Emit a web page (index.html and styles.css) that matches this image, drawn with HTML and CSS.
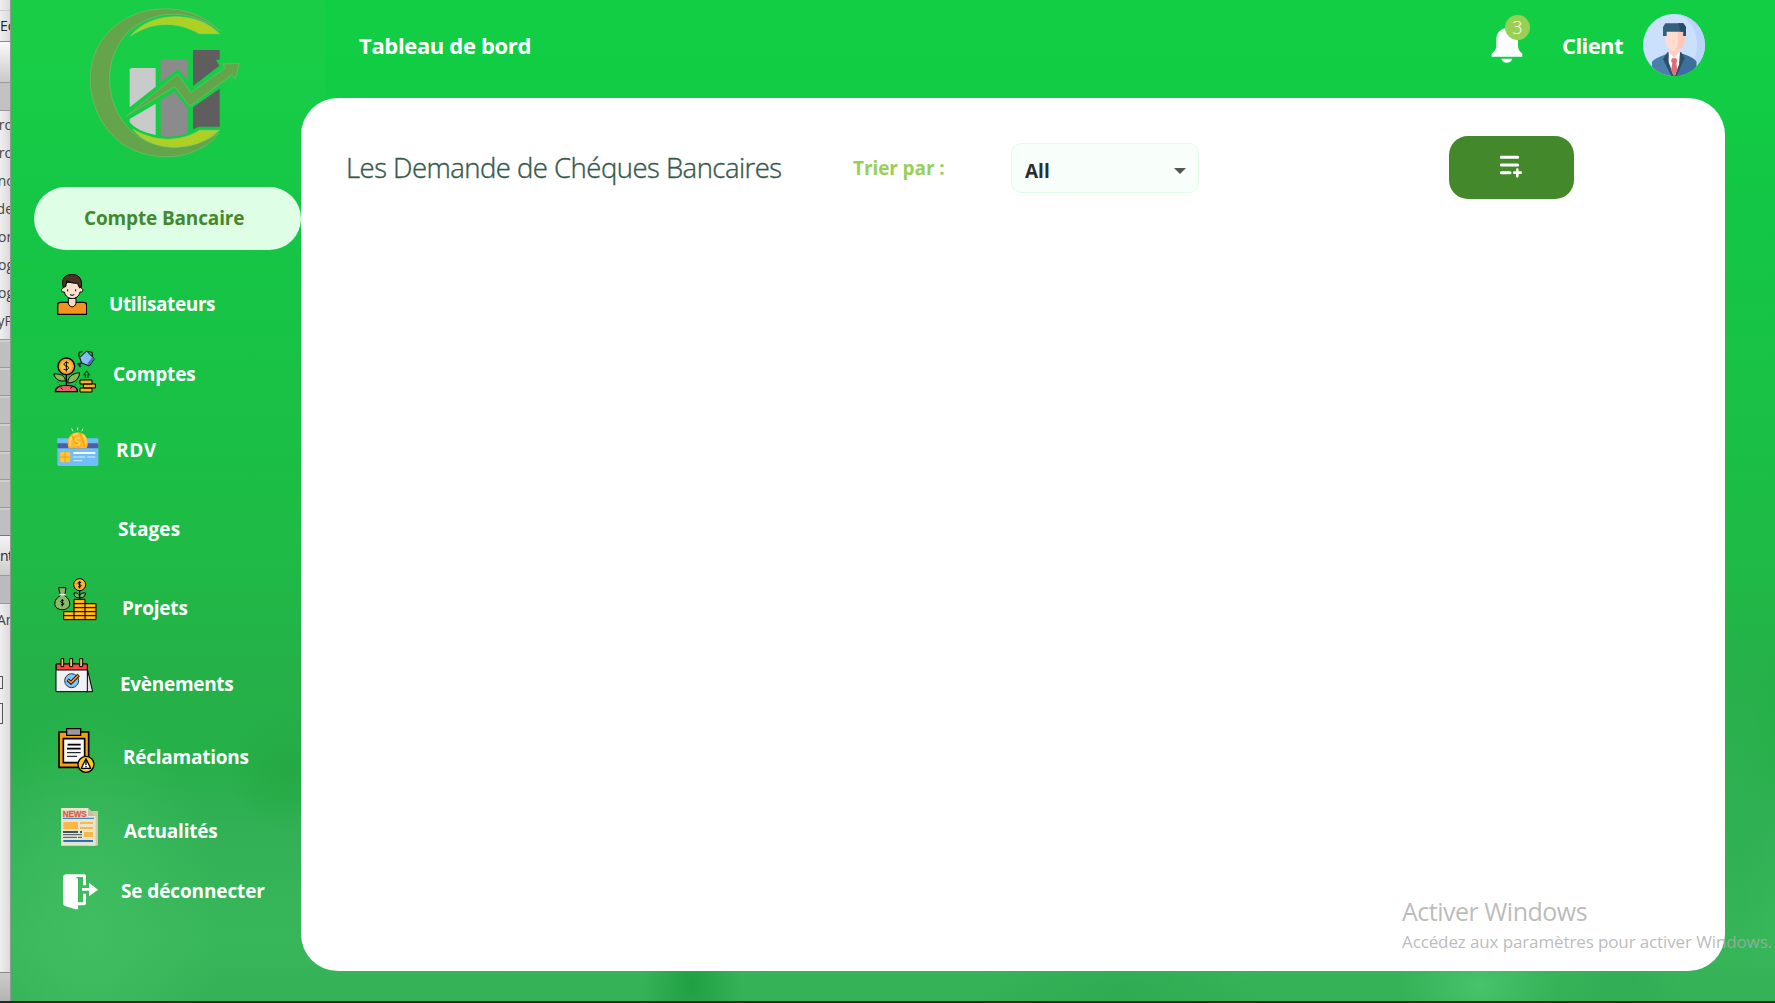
FILE: index.html
```html
<!DOCTYPE html>
<html lang="fr">
<head>
<meta charset="utf-8">
<title>Tableau de bord</title>
<link rel="stylesheet" href="styles.css">
</head>
<body>
<div class="screen">
  <aside class="behind">
    <div class="b-line b-top"></div>
    <div class="b-line b-edit">Ec</div>
    <div class="b-bar b-tools"></div>
    <div class="b-bar b-tab"></div>
    <div class="b-list"><span class="end">pro</span><span class="end">pro</span><span class="end">nc</span><span class="end">de</span><span>or</span><span>og</span><span>og</span><span class="end">yP</span></div>
    <div class="b-stack"></div>
    <div class="b-bar b-cont">nt</div>
    <div class="b-bar b-head"></div>
    <div class="b-an">An</div>
    <div class="b-box"></div>
    <div class="b-box b-box-tall"></div>
    <div class="b-foot"></div>
  </aside>

  <nav class="sidebar">
    <svg class="logo" viewBox="255 0 480 480">
      <path d="M658 92C570-2 385 2 303 124c-62 98-30 232 56 302 90 66 230 60 299-28-88 58-204 62-274-16-74-82-72-208-4-282 70-70 186-80 278-8z" fill="#64a44a" stroke="#7cbd6e" stroke-width="2"/>
      <path d="M392 108C450 34 590 30 658 101h-60c-66-38-142-38-206 7z" fill="#aed022" stroke="#8fd06a" stroke-width="2"/>
      <path d="M398 387c58 36 138 44 200 4h60c-74 70-206 66-260-4z" fill="#aed022" stroke="#8fd06a" stroke-width="2"/>
      <path d="M389 207l6-3h72v56l-78 62zM389 357l78-46v94q-58-12-78-38z" fill="#c9cbca"/>
      <path d="M482 178h81v63l-30-34-51 40zM482 300l42-25 39 49v76q-38 14-81 9z" fill="#8b8b8b"/>
      <path d="M579 150h80v29h-11l10 18-79 61zM579 322l80-56v114h-62l-18 8z" fill="#5f5d5e"/>
      <path d="M380 348l153-126 40 56 104-75-9-11 50-2-12 46-11-11-126 94-45-59z" fill="#64a44a" stroke="#7cbd6e" stroke-width="2"/>
    </svg>
    <a class="account">Compte Bancaire</a>
    <ul class="menu">
      <li class="utilisateurs">
        <svg width="30" height="41" viewBox="171 72 90 123">
          <path d="M173 193v-28q0-8 9-8h69q9 0 9 8v28z" fill="#f6921e" stroke="#000" stroke-width="4"/>
          <path d="M205 145v17q11 18 23 0v-17z" fill="#f8dcc8" stroke="#000" stroke-width="3"/>
          <path d="M189 115c-6 0-6 11 0 11h4c6 26 42 26 47 0h4c6 0 6-11 0-11l-5-18h-44z" fill="#fbe2cf" stroke="#000" stroke-width="3"/>
          <path d="M190 112c-8-25 5-37 20-38 23-4 38 10 34 36l-5 4-7-14c-14 0-22-2-31-8l-4 18z" fill="#493323" stroke="#000" stroke-width="3"/>
          <path d="M203 118v6M227 118v6M210 134q6 4 13 0" fill="none" stroke="#000" stroke-width="3"/>
        </svg>
        <span>Utilisateurs</span>
      </li>
      <li class="comptes">
        <svg width="43" height="43" viewBox="160 299 129 129">
          <path d="M200 372v38" stroke="#000" stroke-width="4"/>
          <path d="M162 371c20-2 33 5 36 20-18 4-30-3-36-20zM240 367c-22 2-35 12-36 31 20 0 34-10 36-31z" fill="#88b858" stroke="#000" stroke-width="3"/>
          <circle cx="200" cy="348" r="25" fill="#faa21b" stroke="#000" stroke-width="4"/><circle cx="200" cy="348" r="17" fill="#ffc34d"/>
          <path d="M207 338c-16-6-18 8-7 9s8 16-8 10M200 332v32" fill="none" stroke="#000" stroke-width="3"/>
          <path d="M167 424c0-14 14-19 33-19s34 5 33 19z" fill="#ef6065" stroke="#000" stroke-width="4"/>
          <path d="M184 412l4 5M212 414l6-4" stroke="#000" stroke-width="3"/>
          <path d="M241 389h36v12h-36zM251 401h36v12h-36zM241 413h36v12h-36z" fill="#ffb022" stroke="#000" stroke-width="3"/>
          <path d="M238 320v-14l10-2M264 303l14 3v12" fill="none" stroke="#000" stroke-width="3"/>
          <path d="M240 322l21-20 23 24-15 21-23-9z" fill="#86bdf5" stroke="#000" stroke-width="3"/><path d="M284 326l-16 20-6-5 16-20z" fill="#4670b0"/>
          <path d="M248 336l-12 8M234 338l9 12" stroke="#182c48" stroke-width="6"/>
          <path d="M257 383v-10h-4l8-11 8 11h-4v10" fill="none" stroke="#093" stroke-width="5"/><path d="M257 383v-10h-4l8-11 8 11h-4v10M175 394v3M179 405v-3M231 394v3M226 405v-3" fill="none" stroke="#06280d" stroke-width="2"/>
        </svg>
        <span>Comptes</span>
      </li>
      <li class="rdv">
        <svg width="42" height="40" viewBox="170 533 126 120">
          <path d="M171 567h123v78q0 5-5 5H176q-5 0-5-5z" fill="#6fbefa"/><path d="M171 582h123v15H171z" fill="#505ea0"/>
          <path d="M205 597c-8-20 0-48 27-48s36 28 27 48z" fill="#ffb52e"/><path d="M210 590c-4-18 5-36 22-36M247 556c10 10 12 26 6 38" fill="none" stroke="#ffd968" stroke-width="5"/><path d="M213 557l23 40M240 552l14 42" stroke="#ff9d0b" stroke-width="4"/>
          <path d="M240 567c-18-6-20 10-8 10s8 14-8 10" fill="none" stroke="#ffd65c" stroke-width="4"/>
          <path d="M214 538l4 8M232 534v9M248 538l-4 8" stroke="#dff3de" stroke-width="3"/>
          <rect x="179" y="608" width="31" height="31" rx="6" fill="#ffc735"/><path d="M179 623h31M194 608v31" stroke="#f59b16" stroke-width="3"/>
          <path d="M219 611h66" stroke="#f5fbff" stroke-width="6"/><path d="M219 623h36M261 623h24M219 634h27" stroke="#d9efff" stroke-width="3"/>
        </svg>
        <span>RDV</span>
      </li>
      <li class="stages"><span>Stages</span></li>
      <li class="projets">
        <svg width="43" height="43" viewBox="161 263 129 129">
          <path d="M238 300v27" stroke="#000" stroke-width="4"/><circle cx="238" cy="283" r="18" fill="#ffb12b" stroke="#000" stroke-width="3"/><path d="M242 277c-10-5-12 5-4 6s4 10-5 6M238 272v22" fill="none" stroke="#000" stroke-width="3"/>
          <path d="M221 308c10-2 17 4 17 14-11 2-17-4-17-14zM255 308c-10-2-17 4-17 14 11 2 17-4 17-14z" fill="#7bb767" stroke="#000" stroke-width="3"/>
          <path d="M175 292h22l-4 24c21 13 21 42-7 42s-30-29-6-42z" fill="#8aba69" stroke="#000" stroke-width="3"/><path d="M177 313h19" stroke="#e8f2e4" stroke-width="5"/><path d="M190 331c-10-3-11 6-4 6s6 9-4 6M186 326v22" fill="none" stroke="#000" stroke-width="3"/>
          <path d="M190 388v-24h31v-37h33v13h33v48z" fill="#ffad13" stroke="#000" stroke-width="3"/>
          <path d="M221 340h33M221 352h66M221 364h66M190 376h97M221 364v24M254 340v48" stroke="#000" stroke-width="3"/>
          <path d="M196 370h18M226 334h22M226 346h18M226 358h18M260 346h20M260 358h20M226 370h18M260 370h20M196 382h18M226 382h18M260 382h20" stroke="#ffd064" stroke-width="3"/>
        </svg>
        <span>Projets</span>
      </li>
      <li class="evenements">
        <svg width="39" height="35" viewBox="164 503 117 105">
          <path d="M262 540l15 64h-20z" fill="#e2e2e2" stroke="#000" stroke-width="3"/>
          <path d="M167 521h94v83h-94z" fill="#f2f2f4" stroke="#000" stroke-width="3"/><path d="M168 521h93v18h-93z" fill="#ff4747" stroke="#000" stroke-width="3"/>
          <path d="M182 505h8v24h-8zM208 505h9v24h-9zM238 505h9v24h-9z" fill="#f6bd5d" stroke="#000" stroke-width="3"/>
          <circle cx="214" cy="571" r="21" fill="#82c3f6" stroke="#233a52" stroke-width="3"/><path d="M202 568l10 9 23-23" fill="none" stroke="#000" stroke-width="10"/><path d="M203 569l9 8 22-22" fill="none" stroke="#ff9c1c" stroke-width="5"/>
        </svg>
        <span>Evènements</span>
      </li>
      <li class="reclamations">
        <svg width="37" height="45" viewBox="174 24 111 135">
          <path d="M177 36h89v106h-89z" fill="#fb9f0f" stroke="#000" stroke-width="5"/><path d="M190 56h64v72h-64z" fill="#f8f8fa" stroke="#000" stroke-width="5"/>
          <path d="M200 26h42v20h-42z" fill="#999" stroke="#000" stroke-width="4"/><path d="M203 74h39M201 86h41" stroke="#000" stroke-width="5"/><path d="M201 98h41M201 109h30" stroke="#000" stroke-width="3"/>
          <circle cx="258" cy="133" r="24" fill="#ffc81c" stroke="#000" stroke-width="4"/><path d="M258 116l14 29h-28z" fill="#fff" stroke="#000" stroke-width="4" stroke-linejoin="round"/><path d="M258 123v12M258 138v4" stroke="#000" stroke-width="4"/>
        </svg>
        <span>Réclamations</span>
      </li>
      <li class="actualites">
        <svg width="37" height="38" viewBox="183 264 111 114">
          <path d="M265 273h29v104h-29z" fill="#cfc8aa"/><path d="M183 264h81l23 24v89H183z" fill="#e9e4cd"/><path d="M264 264v24h23z" fill="#c5c0a2"/>
          <text class="news" x="188" y="291" textLength="72" lengthAdjust="spacingAndGlyphs">NEWS</text>
          <path d="M189 295h93" stroke="#1d73bd" stroke-width="3"/><path d="M190 363h89" stroke="#1d73bd" stroke-width="6"/>
          <path d="M190 306h44v21h-44zM252 336h27v15h-27zM240 306h39v6h-39zM240 321h39v6h-39z" fill="#fdb746"/>
          <path d="M189 336h45M240 336h6" stroke="#45515c" stroke-width="6"/><path d="M189 344h57M189 352h42M234 352h12" stroke="#45515c" stroke-width="3"/>
        </svg>
        <span>Actualités</span>
      </li>
      <li class="deconnecter">
        <svg width="35" height="36" viewBox="189 461 105 108">
          <path d="M197 462h55q6 0 6 6v27h-9v-25h-22l7 5v71h15v-26h9v29q0 6-6 6h-18v12h-8l-31-10q-6-2-6-8v-78q0-7 8-9z" fill="#fff"/>
          <path d="M246 503h21v-16l27 21-27 20v-17h-21z" fill="#fff"/>
        </svg>
        <span>Se déconnecter</span>
      </li>
    </ul>
  </nav>

  <main class="main">
    <header class="topbar">
      <h1>Tableau de bord</h1>
      <div class="bell">
        <svg width="32" height="36" viewBox="332 82 96 108">
          <path d="M380 84c-22 4-32 16-32 36v18c0 11-6 17-14 24v9h92v-9c-8-7-13-13-13-24v-18c0-20-11-32-33-36zM363 177h33c-4 16-29 16-33 0z" fill="#fff"/>
        </svg>
        <span class="badge">3</span>
      </div>
      <span class="client">Client</span>
      <svg class="avatar" width="62" height="62" viewBox="789 41 186 186">
        <defs><clipPath id="face"><circle cx="882" cy="134" r="93"/></clipPath></defs>
        <g clip-path="url(#face)">
          <path d="M789 41h186v186H789z" fill="#cbe0fd"/><path d="M895 41c38 18 56 50 56 92 0 22-4 40-12 54h36V41z" fill="#b9d5f9"/>
          <path d="M816 227v-43q8-10 50-25h33q42 13 50 27v41z" fill="#4a80ab"/><path d="M908 160q36 12 41 24v43h-60z" fill="#3c6f9b"/>
          <path d="M862 156h42l10 18-24 53h-16l-25-50z" fill="#2d4f69"/>
          <path d="M866 155h34l-3 38-12 32h-5l-14-40z" fill="#fff"/>
          <path d="M868 140h29v16l-15 16-14-16z" fill="#ffcdbf"/>
          <path d="M857 92h53v24c0 16-8 34-27 36-19-2-28-19-28-36z" fill="#ffdcd0"/><path d="M893 92h22v25c0 18-10 32-30 33 12-12 9-34 8-58z" fill="#ffc8bb"/>
          <path d="M849 107V80l7-11h54l8 11v27h-8V94h-50v13z" fill="#365f7e"/><path d="M894 69h16l8 11v27h-8V94h-8z" fill="#294d68"/>
          <path d="M876 174h13l3 8-3 6 3 22-10 17-9-17 4-22-4-6z" fill="#e36d75"/>
        </g>
      </svg>
    </header>

    <section class="panel">
      <div class="toolbar">
        <h2>Les Demande de Chéques Bancaires</h2>
        <label>Trier par :</label>
        <div class="select"><span>All</span><i></i></div>
        <button class="add" aria-label="Ajouter">
          <svg width="22" height="23" viewBox="360 467 66 69"><path d="M364 474h49M364 497h49M364 520h26" stroke="#fff" stroke-width="9" stroke-linecap="round"/><path d="M412 511v20M403 520h19" stroke="#fff" stroke-width="8" stroke-linecap="round"/></svg>
        </button>
      </div>
    </section>
  </main>

  <div class="watermark"><p class="wm-title">Activer Windows</p><p class="wm-text">Accédez aux paramètres pour activer Windows.</p></div>
</div>
</body>
</html>
```
FILE: styles.css
```css
* { box-sizing: border-box; margin: 0; padding: 0; }
body { width: 1775px; height: 1003px; overflow: hidden; font-family: "Open Sans", "Noto Sans", sans-serif; }
svg { display: block; flex: none; }

.screen {
  position: relative;
  display: flex;
  width: 1775px;
  height: 1003px;
  border-bottom: 2px solid #1f2b24;
  background:
    linear-gradient(rgba(34, 203, 74, .5), rgba(34, 203, 74, 0)) 0 0 / 325px 320px no-repeat,
    radial-gradient(ellipse 50px 90px at 692px 985px, #21a043, transparent),
    radial-gradient(ellipse 80px 60px at 1480px 985px, #46c36b, transparent),
    radial-gradient(ellipse 60px 70px at 1625px 985px, #31ad55, transparent),
    radial-gradient(ellipse 140px 60px at 1120px 995px, #2eac53, transparent),
    radial-gradient(ellipse 50px 180px at 1735px 800px, #2fb052, transparent),
    radial-gradient(ellipse 60px 60px at 285px 770px, #24a944, transparent),
    radial-gradient(ellipse 130px 220px at 90px 930px, #3fbd60, transparent),
    linear-gradient(#11cf45 0, #11cd44 80px, #13c644 200px, #19c145 400px, #1fba46 560px, #25b048 680px, #27b04a 760px, #32b056 830px, #38b75a 940px, #34b057 1001px);
}

/* Strip of the window that lies behind */
.behind { width: 11px; overflow: hidden; background: linear-gradient(90deg, #efefef, #dadada); border-right: 1px solid #8f9a91; font: 14px/28px "Open Sans", sans-serif; color: #444; white-space: nowrap; }
.b-line { border-bottom: 1px solid #ccc; }
.b-top { height: 11px; }
.b-edit { height: 31px; line-height: 29px; border-color: #888; color: #222; }
.b-bar { border-bottom: 1px solid #999; }
.b-tools { height: 41px; background: linear-gradient(#fafafa, #c9c9c9); }
.b-tab { height: 28px; background: #c2c2c2; }
.b-list { display: flex; flex-direction: column; height: 228px; margin-right: -3px; line-height: 28px; }
.b-list span { height: 28px; margin-left: -2px; }
.b-list .end { align-self: flex-end; }
.b-stack { height: 196px; background: repeating-linear-gradient(#999 0 1px, #cecece 1px 3px, #bfbfbf 3px 28px); }
.b-cont { height: 41px; line-height: 40px; color: #223; background: linear-gradient(#f4f4f4, #ccc); border-top: 1px solid #777; letter-spacing: -.5px; }
.b-head { height: 28px; background: #bbb; }
.b-an { height: 72px; line-height: 31px; margin-left: -3px; }
.b-box { width: 3px; height: 13px; margin-bottom: 14px; border: 1px solid #555; border-left: 0; }
.b-box-tall { height: 21px; margin-bottom: 248px; }
.b-foot { height: 40px; background: linear-gradient(#ccc, #aaa); border-top: 1px solid #888; }

.sidebar { width: 290px; height: 1001px; }
.logo { width: 160px; height: 160px; margin-left: 74px; }
.account {
  display: block;
  width: 267px;
  height: 63px;
  margin: 27px 0 0 23px;
  padding-left: 50px;
  border-radius: 32px;
  background: #dffee6;
  color: #43882b;
  font-size: 19px;
  font-weight: 700;
  letter-spacing: -.15px;
  line-height: 62px;
}
.menu {
  display: grid;
  grid-template-rows: 70px 76px 79px 79px 76px 73px 74px 60px 60px;
  margin-top: 20px;
  list-style: none;
  color: #fff;
  font-size: 19px;
  font-weight: 700;
  letter-spacing: -.12px;
  line-height: 30px;
  white-space: nowrap;
}
.news { fill: #da5b48; stroke: #da5b48; font: 700 28px "Liberation Sans", sans-serif; letter-spacing: 0; }
.menu li { display: flex; align-items: flex-start; }
.menu span { margin-top: 19px; }
.utilisateurs { gap: 22px; padding: 4px 0 0 46px; letter-spacing: -.4px; }
.comptes { gap: 17px; padding: 10px 0 0 42px; }
.rdv { gap: 17px; padding: 11px 0 0 46px; letter-spacing: .6px; }
.stages { padding-left: 107px; letter-spacing: .1px; }
.projets { gap: 25px; padding: 4px 0 0 43px; letter-spacing: -.2px; }
.evenements { gap: 26px; padding: 8px 0 0 44px; letter-spacing: -.3px; }
.reclamations { gap: 28px; padding: 5px 0 0 47px; letter-spacing: -.25px; }
.actualites { gap: 26px; padding: 11px 0 0 50px; letter-spacing: -.2px; }
.deconnecter { gap: 23px; padding: 17px 0 0 52px; }
.menu .utilisateurs span, .menu .projets span { margin-top: 15px; }
.menu .comptes span { margin-top: 9px; }
.menu .rdv span, .menu .actualites span { margin-top: 8px; }
.menu .evenements span { margin-top: 11px; }
.menu .reclamations span { margin-top: 14px; }
.menu .deconnecter span { margin-top: 2px; }

.main { width: 1424px; }
.topbar { display: flex; align-items: flex-start; height: 98px; padding-left: 58px; color: #fff; }
.topbar h1, .client { margin-top: 29px; font-size: 22px; font-weight: 700; line-height: 32px; white-space: nowrap; }
.topbar h1 { width: 1131px; letter-spacing: -.35px; }
.bell { position: relative; width: 72px; padding: 27px 0 0 1px; }
.badge { position: absolute; left: 15px; top: 15px; width: 25px; height: 25px; border-radius: 50%; background: #98d056; font-size: 18px; font-weight: 300; line-height: 25px; text-align: center; }
.client { width: 81px; letter-spacing: -.6px; }
.avatar { margin-top: 14px; }

.panel { height: 873px; margin-top: .4px; border-radius: 37px; background: #fff; }
.toolbar { display: flex; align-items: flex-start; padding: 37.6px 0 0 45px; white-space: nowrap; }
.toolbar h2 { width: 507px; margin-top: 12px; color: #36594b; font-size: 27.5px; font-weight: 300; letter-spacing: -.53px; line-height: 40px; -webkit-text-stroke: .4px #36594b; }
.toolbar label { width: 158px; margin-top: 17px; color: #98d056; font-size: 19px; font-weight: 700; letter-spacing: -.1px; line-height: 30px; }
.select { display: flex; justify-content: space-between; align-items: center; width: 188px; height: 50px; margin-top: 7px; padding: 6px 12px 0 13px; border: 1.5px solid #dffee8; border-radius: 10px; background: #f8fefa; color: #2d2d31; font-size: 19px; font-weight: 700; }
.select i { width: 0; height: 0; border: 6px solid transparent; border-top-color: #555; border-bottom: 0; }
.add { display: grid; place-items: center; width: 125px; height: 63px; margin-left: 250px; padding: 0 2px 2px 0; border: 0; border-radius: 19px; background: #43882b; }

/* System notice floating over the desktop */
.watermark { position: absolute; left: 1402px; top: 893px; color: rgba(170, 170, 170, .8); white-space: nowrap; }
.wm-title { font-size: 25px; letter-spacing: -.5px; line-height: 36px; }
.wm-text { font-size: 17px; letter-spacing: -.12px; line-height: 25px; }
```
